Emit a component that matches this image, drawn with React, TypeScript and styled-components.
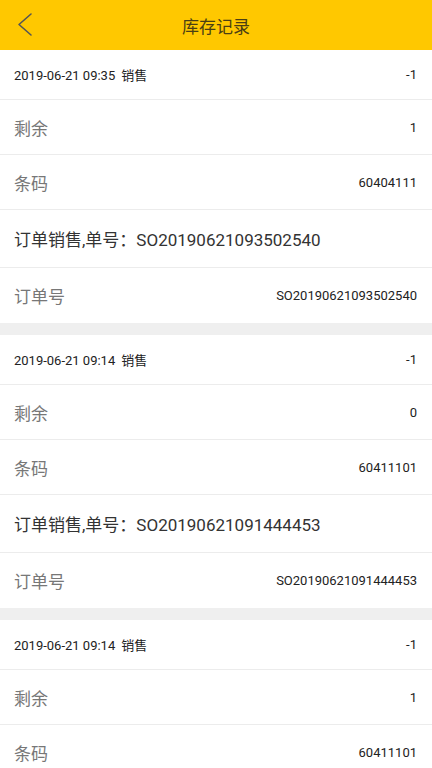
import React from "react";
import styled, { createGlobalStyle } from "styled-components";

const GlobalStyle = createGlobalStyle`
  html, body {
    margin: 0;
    padding: 0;
    background: #efefef;
    font-family: Roboto, "Noto Sans CJK SC", sans-serif;
    overflow: hidden;
  }
`;

const Page = styled.div`
  width: 432px;
  display: flex;
  flex-direction: column;
`;

const Header = styled.header`
  height: 50px;
  background: #ffc800;
  display: flex;
  align-items: center;
  justify-content: center;
  position: relative;
`;

const BackButton = styled.button`
  position: absolute;
  left: 10px;
  top: 9px;
  width: 30px;
  height: 32px;
  padding: 0;
  border: none;
  background: transparent;
  display: flex;
  align-items: center;
  justify-content: center;
`;

const Title = styled.h1`
  margin: 0;
  font-size: 17px;
  font-weight: 400;
  color: #4a3f14;
`;

const Card = styled.section`
  background: #fff;
  margin-bottom: 12px;
  display: flex;
  flex-direction: column;
`;

const Row = styled.div<{ $h: number; $last?: boolean }>`
  height: ${(p) => p.$h}px;
  box-sizing: content-box;
  border-bottom: ${(p) => (p.$last ? "none" : "1px solid #ececec")};
  padding: 0 15px 0 14px;
  display: flex;
  align-items: center;
  justify-content: space-between;
`;

const SmallText = styled.span`
  font-size: 13px;
  color: #222;
`;

const Label = styled.span`
  font-size: 17px;
  color: #777;
`;

const OrderLine = styled.span`
  font-size: 17px;
  color: #333;
`;

const Tag = styled.span`
  margin-left: 6px;
`;

type Rec = {
  time: string;
  delta: string;
  remain: string;
  code: string;
  order: string;
};

const records: Rec[] = [
  { time: "2019-06-21 09:35", delta: "-1", remain: "1", code: "60404111", order: "SO20190621093502540" },
  { time: "2019-06-21 09:14", delta: "-1", remain: "0", code: "60411101", order: "SO20190621091444453" },
  { time: "2019-06-21 09:14", delta: "-1", remain: "1", code: "60411101", order: "SO20190621091444453" },
];

const RecordCard: React.FC<{ r: Rec }> = ({ r }) => (
  <Card>
    <Row $h={49}>
      <SmallText>
        {r.time}
        <Tag>销售</Tag>
      </SmallText>
      <SmallText>{r.delta}</SmallText>
    </Row>
    <Row $h={54}>
      <Label>剩余</Label>
      <SmallText>{r.remain}</SmallText>
    </Row>
    <Row $h={54}>
      <Label>条码</Label>
      <SmallText>{r.code}</SmallText>
    </Row>
    <Row $h={57}>
      <OrderLine>订单销售,单号：{r.order}</OrderLine>
    </Row>
    <Row $h={55} $last>
      <Label>订单号</Label>
      <SmallText>{r.order}</SmallText>
    </Row>
  </Card>
);

export default function App() {
  return (
    <Page>
      <GlobalStyle />
      <Header>
        <BackButton aria-label="back">
          <svg width="30" height="32" viewBox="0 0 30 32">
            <polyline
              points="21,5 9,15.5 21,26"
              fill="none"
              stroke="#555"
              strokeWidth="1.6"
              strokeLinecap="round"
              strokeLinejoin="round"
            />
          </svg>
        </BackButton>
        <Title>库存记录</Title>
      </Header>
      {records.map((r, i) => (
        <RecordCard key={i} r={r} />
      ))}
    </Page>
  );
}
